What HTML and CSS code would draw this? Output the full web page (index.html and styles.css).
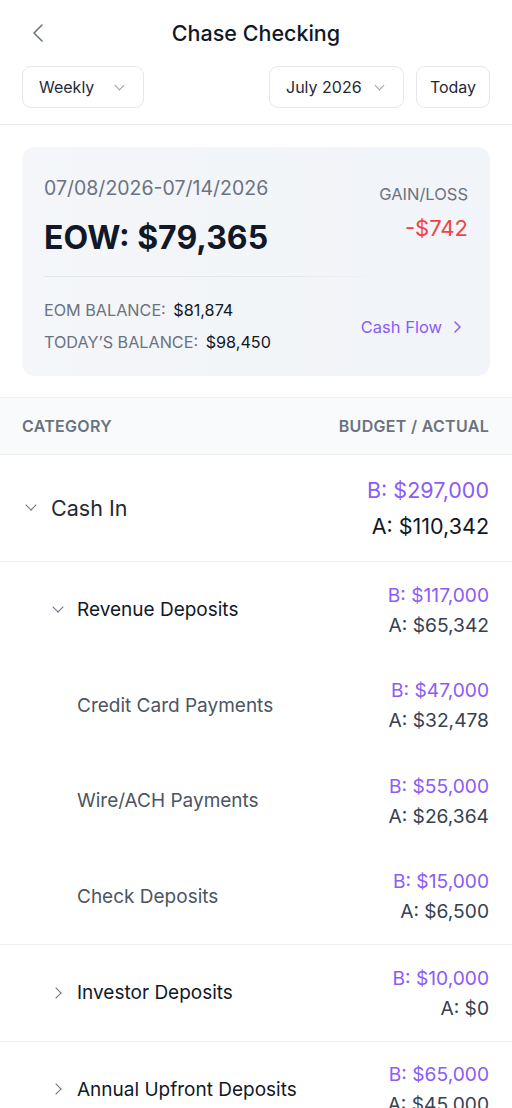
FILE: index.html
```html
<!DOCTYPE html>
<html lang="en">
<head>
    <meta charset="UTF-8">
    <meta name="viewport" content="width=device-width, initial-scale=1.0">
    <title>Chase Checking</title>
    <link rel="stylesheet" href="styles.css">
</head>
<body>
    <div class="top">
        <div class="topbar">
            <a href="javascript:;" class="back">
                <svg width="12" height="20" viewBox="0 0 12 20"><path d="M10 2 L2 10 L10 18" fill="none" stroke="#6b7280" stroke-width="1.6" stroke-linecap="round" stroke-linejoin="round"/></svg>
            </a>
            <h1>Chase Checking</h1>
        </div>
        <div class="controls">
            <div class="select">Weekly <span class="caret"></span></div>
            <div class="spacer"></div>
            <div class="select month">July 2026 <span class="caret"></span></div>
            <div class="btn">Today</div>
        </div>
    </div>

    <div class="card">
        <div class="card-top">
            <div>
                <div class="range">07/08/2026-07/14/2026</div>
                <div class="eow">EOW: $79,365</div>
            </div>
            <div class="gain">
                <div class="gain-label">GAIN/LOSS</div>
                <div class="gain-val">-$742</div>
            </div>
        </div>
        <div class="card-line"></div>
        <div class="card-bottom">
            <div>
                <div class="bal"><span>EOM BALANCE:</span> $81,874</div>
                <div class="bal"><span>TODAY’S BALANCE:</span> $98,450</div>
            </div>
            <a href="javascript:;" class="flow">Cash Flow
                <svg width="9" height="14" viewBox="0 0 9 14"><path d="M2 2 L7 7 L2 12" fill="none" stroke="#8b5cf6" stroke-width="1.5" stroke-linecap="round" stroke-linejoin="round"/></svg>
            </a>
        </div>
    </div>

    <div class="thead">
        <span>CATEGORY</span>
        <span>BUDGET / ACTUAL</span>
    </div>

    <div class="row main">
        <div class="name"><i class="chev down"></i>Cash In</div>
        <div class="vals"><div class="b">B: $297,000</div><div class="a">A: $110,342</div></div>
    </div>

    <div class="group">
        <div class="row sub">
            <div class="name"><i class="chev down"></i>Revenue Deposits</div>
            <div class="vals"><div class="b">B: $117,000</div><div class="a">A: $65,342</div></div>
        </div>
        <div class="row item">
            <div class="name">Credit Card Payments</div>
            <div class="vals"><div class="b">B: $47,000</div><div class="a">A: $32,478</div></div>
        </div>
        <div class="row item">
            <div class="name">Wire/ACH Payments</div>
            <div class="vals"><div class="b">B: $55,000</div><div class="a">A: $26,364</div></div>
        </div>
        <div class="row item">
            <div class="name">Check Deposits</div>
            <div class="vals"><div class="b">B: $15,000</div><div class="a">A: $6,500</div></div>
        </div>
    </div>

    <div class="group">
        <div class="row sub">
            <div class="name"><i class="chev right"></i>Investor Deposits</div>
            <div class="vals"><div class="b">B: $10,000</div><div class="a">A: $0</div></div>
        </div>
    </div>

    <div class="group">
        <div class="row sub">
            <div class="name"><i class="chev right"></i>Annual Upfront Deposits</div>
            <div class="vals"><div class="b">B: $65,000</div><div class="a">A: $45,000</div></div>
        </div>
    </div>
</body>
</html>
```

FILE: styles.css
```css
*{padding:0;margin:0;box-sizing:border-box}
a{text-decoration:none}
body{
    font-family:Inter,"Noto Sans",sans-serif;
    color:#111827;
    background:#fff;
    width:512px;
    overflow:hidden;
}
.top{
    padding:0 22px 16px 22px;
    border-bottom:1px solid #e8eaee;
}
.topbar{
    position:relative;
    height:66px;
    display:flex;
    align-items:center;
    justify-content:center;
}
.topbar h1{
    font-size:21.5px;
    font-weight:500;
    color:#111827;
}
.back{
    position:absolute;
    left:10px;
    top:23px;
    display:flex;
}
.controls{
    display:flex;
    gap:12px;
    height:42px;
}
.spacer{flex:1}
.select,.btn{
    border:1px solid #e5e7eb;
    border-radius:9px;
    display:flex;
    align-items:center;
    font-size:16px;
    color:#1f2937;
}
.select{
    width:122px;
    padding-left:16px;
}
.select.month{
    width:135px;
}
.btn{
    width:74px;
    justify-content:center;
}
.caret{
    width:7px;
    height:7px;
    border-right:1.2px solid #9ca3af;
    border-bottom:1.2px solid #9ca3af;
    transform:rotate(45deg);
    margin-left:auto;
    margin-right:20px;
    margin-top:-4px;
}
.card{
    margin:22px 22px 0 22px;
    height:229px;
    border-radius:13px;
    background:linear-gradient(90deg,#f4f6f9,#f1f4f8);
    padding:29px 22px 0 22px;
}
.card-top{
    display:flex;
    justify-content:space-between;
}
.range{
    font-size:19.5px;
    line-height:24px;
    color:#6b7280;
}
.eow{
    margin-top:19px;
    font-size:32px;
    line-height:38px;
    font-weight:700;
    color:#111827;
}
.gain{
    text-align:right;
    padding-top:8px;
}
.gain-label{
    font-size:16.5px;
    line-height:20px;
    color:#6b7280;
}
.gain-val{
    margin-top:11px;
    font-size:22px;
    line-height:26px;
    color:#ef4444;
}
.card-line{
    margin-top:19px;
    height:1px;
    width:342px;
    background:linear-gradient(90deg,#e3e6eb 70%,rgba(227,230,235,0));
}
.card-bottom{
    margin-top:23px;
    display:flex;
    justify-content:space-between;
    align-items:center;
}
.bal{
    font-size:16.2px;
    line-height:20px;
    color:#111827;
}
.bal + .bal{margin-top:12px}
.bal span{
    color:#6b7280;
    margin-right:3px;
}
.flow{
    display:flex;
    align-items:center;
    gap:11px;
    font-size:16.5px;
    color:#8b5cf6;
    margin-right:6px;
    margin-top:2px;
}
.thead{
    margin-top:21px;
    height:58px;
    background:#f8fafc;
    border-top:1px solid #eef0f3;
    border-bottom:1px solid #eceef2;
    display:flex;
    justify-content:space-between;
    align-items:center;
    padding:0 23px 0 22px;
    font-size:16px;
    font-weight:600;
    color:#6b7280;
    letter-spacing:0.3px;
}
.row{
    display:flex;
    justify-content:space-between;
    align-items:center;
    padding-right:23px;
}
.row.main{
    height:107px;
    padding-left:24px;
    border-bottom:1px solid #eceef2;
}
.group{
    border-bottom:1px solid #eceef2;
}
.row.sub,.row.item{
    height:95.5px;
    padding-left:52px;
}
.row.item{
    padding-left:77px;
}
.name{
    display:flex;
    align-items:center;
}
.main .name{
    font-size:21.5px;
    color:#1f2937;
}
.sub .name{
    font-size:19px;
    color:#111827;
}
.item .name{
    font-size:19px;
    color:#4b5563;
}
.chev{
    display:block;
    width:8px;
    height:8px;
    border-right:1.3px solid #6b7280;
    border-bottom:1.3px solid #6b7280;
}
.chev.down{
    transform:rotate(45deg);
    margin:-5px 15px 0 2px;
}
.main .chev.down{
    margin:-6px 16px 0 3px;
}
.chev.right{
    transform:rotate(-45deg);
    margin:0 17px 0 0;
}
.vals{
    text-align:right;
}
.main .vals{
    font-size:21.5px;
    line-height:36px;
}
.sub .vals,.item .vals{
    font-size:19.2px;
    line-height:30px;
}
.b{color:#8b5cf6}
.main .a{color:#111827}
.sub .a,.item .a{color:#374151}
```
